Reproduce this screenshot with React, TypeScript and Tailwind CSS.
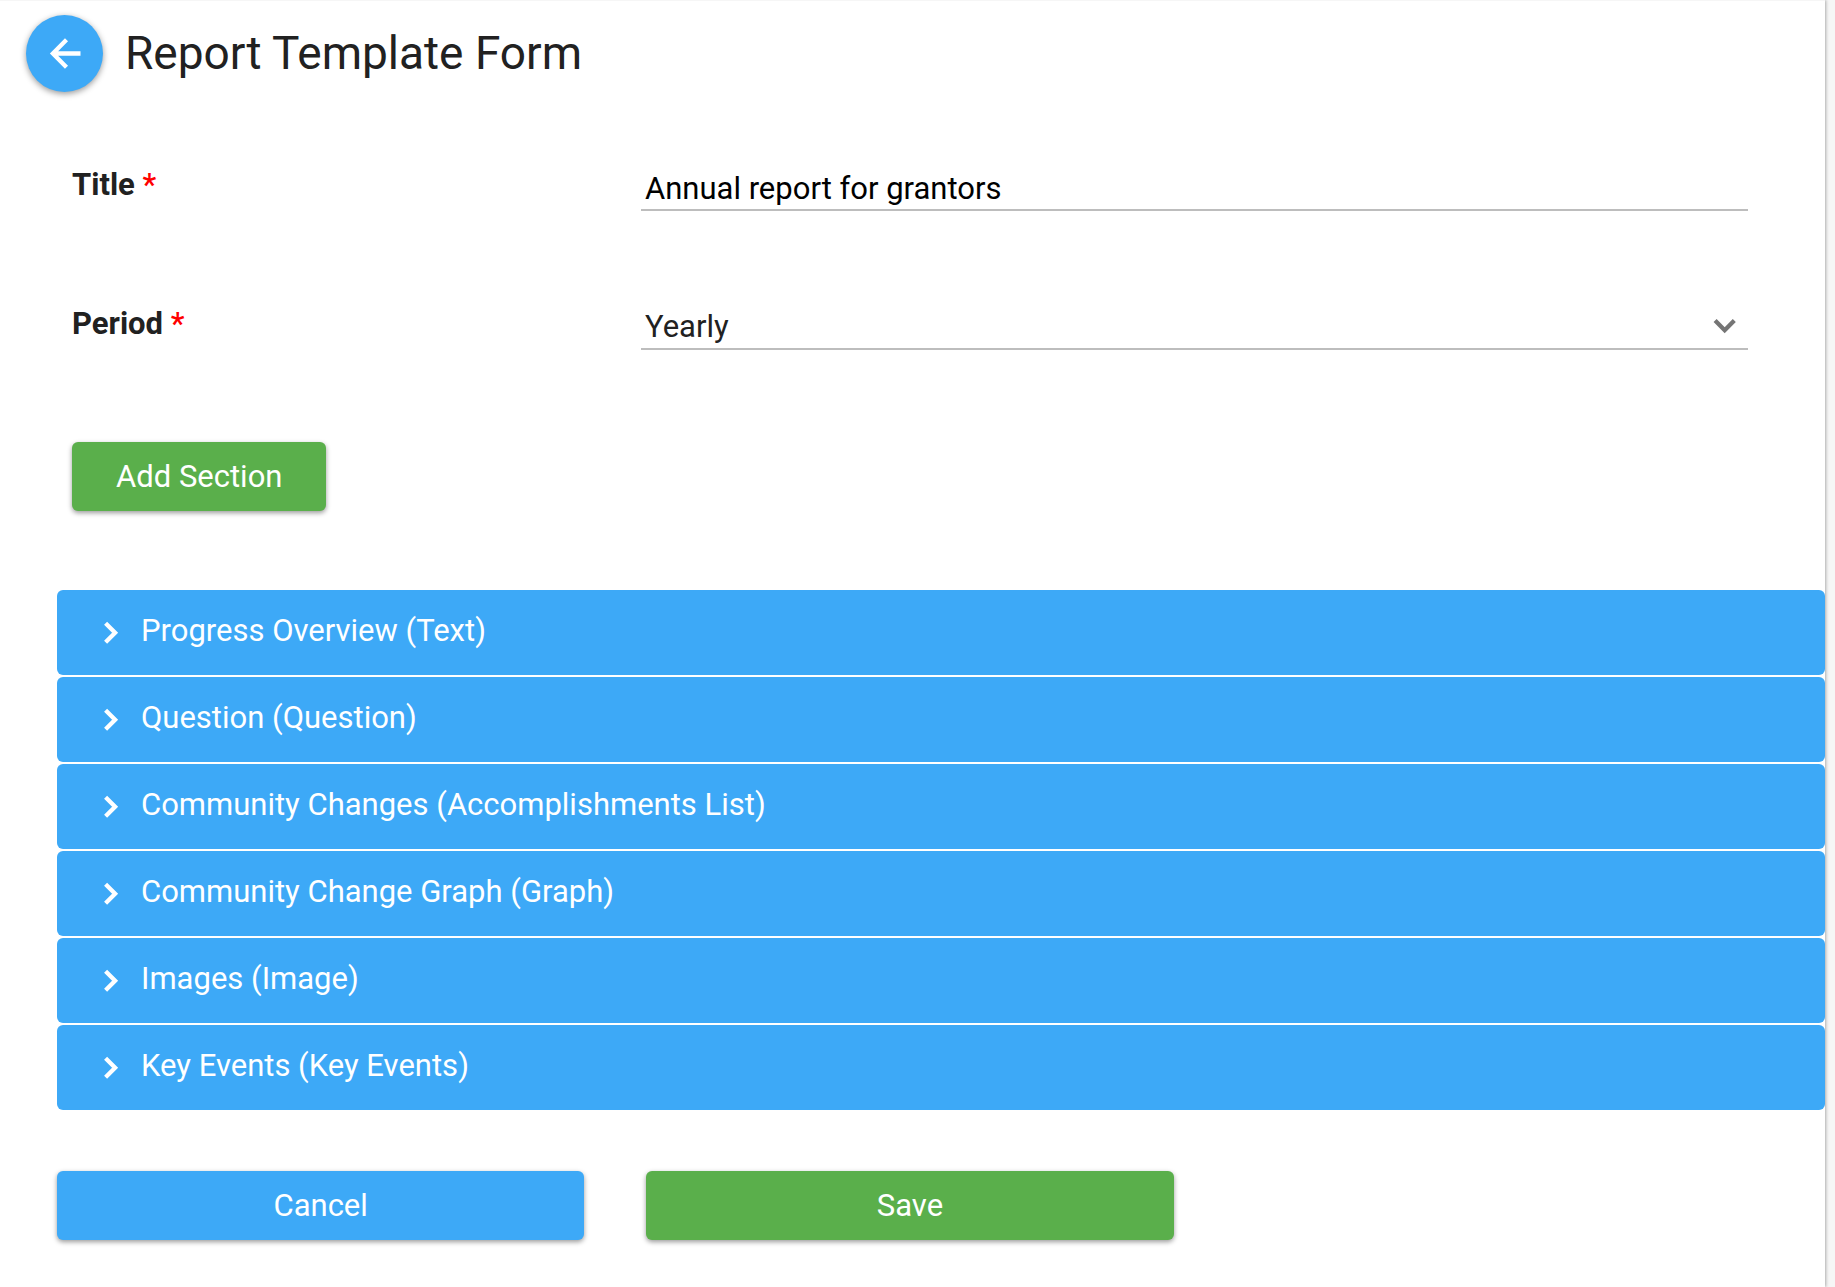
import React, { useState } from "react";

const sections = [
  { name: "Progress Overview", type: "Text" },
  { name: "Question", type: "Question" },
  { name: "Community Changes", type: "Accomplishments List" },
  { name: "Community Change Graph", type: "Graph" },
  { name: "Images", type: "Image" },
  { name: "Key Events", type: "Key Events" },
];

const periods = ["Monthly", "Quarterly", "Yearly"];

const icons = {
  back: "M38.5 22.5H11M24.5 8.8 10.9 22.5 24.5 36.2",
  down: "M13.1 17.6 22.7 27.2 32.3 17.6",
  right: "M18.6 13.3 28.1 22.8 18.6 32.3",
};

function Icon({
  name,
  className = "",
}: {
  name: keyof typeof icons;
  className?: string;
}) {
  return (
    <svg
      viewBox="0 0 46 46"
      fill="none"
      stroke="currentColor"
      strokeWidth="4.3"
      aria-hidden="true"
      className={`size-[46px] shrink-0 ${className}`}
    >
      <path d={icons[name]} />
    </svg>
  );
}

const buttonClass =
  "h-[69px] rounded-md text-[31px] leading-10 text-white shadow-[0_2px_5px_rgba(0,0,0,0.4)]";

export default function App() {
  const [title, setTitle] = useState("Annual report for grantors");
  const [period, setPeriod] = useState("Yearly");

  return (
    <div className="min-h-screen bg-[#f6f6f6] pr-[10px] font-[Roboto,sans-serif] text-[31px] leading-10 text-[#212121]">
      <main className="min-h-screen border-t border-[#f6f6f6] bg-white shadow-[1px_0_3px_rgba(0,0,0,0.3)]">
        {/* Header */}
        <header className="flex items-center gap-[22px] pt-[14px] pl-[26px]">
          <button
            type="button"
            aria-label="Back"
            className="flex size-[77px] items-center justify-center rounded-full bg-[#3da9f7] text-white shadow-[0_2px_6px_rgba(0,0,0,0.4)]"
          >
            <Icon name="back" />
          </button>
          <h1 className="pb-[2px] text-[46px] leading-[60px]">
            Report Template Form
          </h1>
        </header>

        <form className="pl-[57px]" onSubmit={(e) => e.preventDefault()}>
          <div className="pt-[66px] pr-[77px] pl-[15px]">
            {/* Title */}
            <div className="grid grid-cols-[569fr_1107fr]">
              <label htmlFor="title" className="pt-[7px] font-bold">
                Title <span className="font-medium text-[#ff0000]">*</span>
              </label>
              <input
                id="title"
                type="text"
                value={title}
                onChange={(e) => setTitle(e.target.value)}
                className="h-[53px] w-full border-b-2 border-[#bdbdbd] pt-[9px] pl-1 text-black outline-none"
              />
            </div>

            {/* Period */}
            <div className="mt-[86px] grid grid-cols-[569fr_1107fr]">
              <label htmlFor="period" className="pt-[7px] font-bold">
                Period <span className="font-medium text-[#ff0000]">*</span>
              </label>
              <div className="relative">
                <select
                  id="period"
                  value={period}
                  onChange={(e) => setPeriod(e.target.value)}
                  className="h-[53px] w-full appearance-none border-b-2 border-[#bdbdbd] pt-2 pl-1 outline-none"
                >
                  {periods.map((p) => (
                    <option key={p}>{p}</option>
                  ))}
                </select>
                <Icon
                  name="down"
                  className="pointer-events-none absolute right-0 bottom-[1px] text-[#757575]"
                />
              </div>
            </div>

            <button
              type="button"
              className={`${buttonClass} mt-[92px] bg-[#5aaf4b] px-11`}
            >
              Add Section
            </button>
          </div>

          {/* Sections */}
          <div className="mt-[79px] flex flex-col gap-[2px]">
            {sections.map((s) => (
              <button
                key={s.name}
                type="button"
                aria-expanded={false}
                className="flex h-[85px] items-center gap-2 rounded-md bg-[#3da9f7] pl-[30px] text-left text-white"
              >
                <Icon name="right" />
                <span className="pb-1">
                  {s.name} ({s.type})
                </span>
              </button>
            ))}
          </div>

          {/* Actions */}
          <div className="mt-[61px] grid grid-cols-3 gap-[62px] pr-[62px]">
            <button type="button" className={`${buttonClass} bg-[#3da9f7]`}>
              Cancel
            </button>
            <button type="submit" className={`${buttonClass} bg-[#5aaf4b]`}>
              Save
            </button>
          </div>
        </form>
      </main>
    </div>
  );
}
